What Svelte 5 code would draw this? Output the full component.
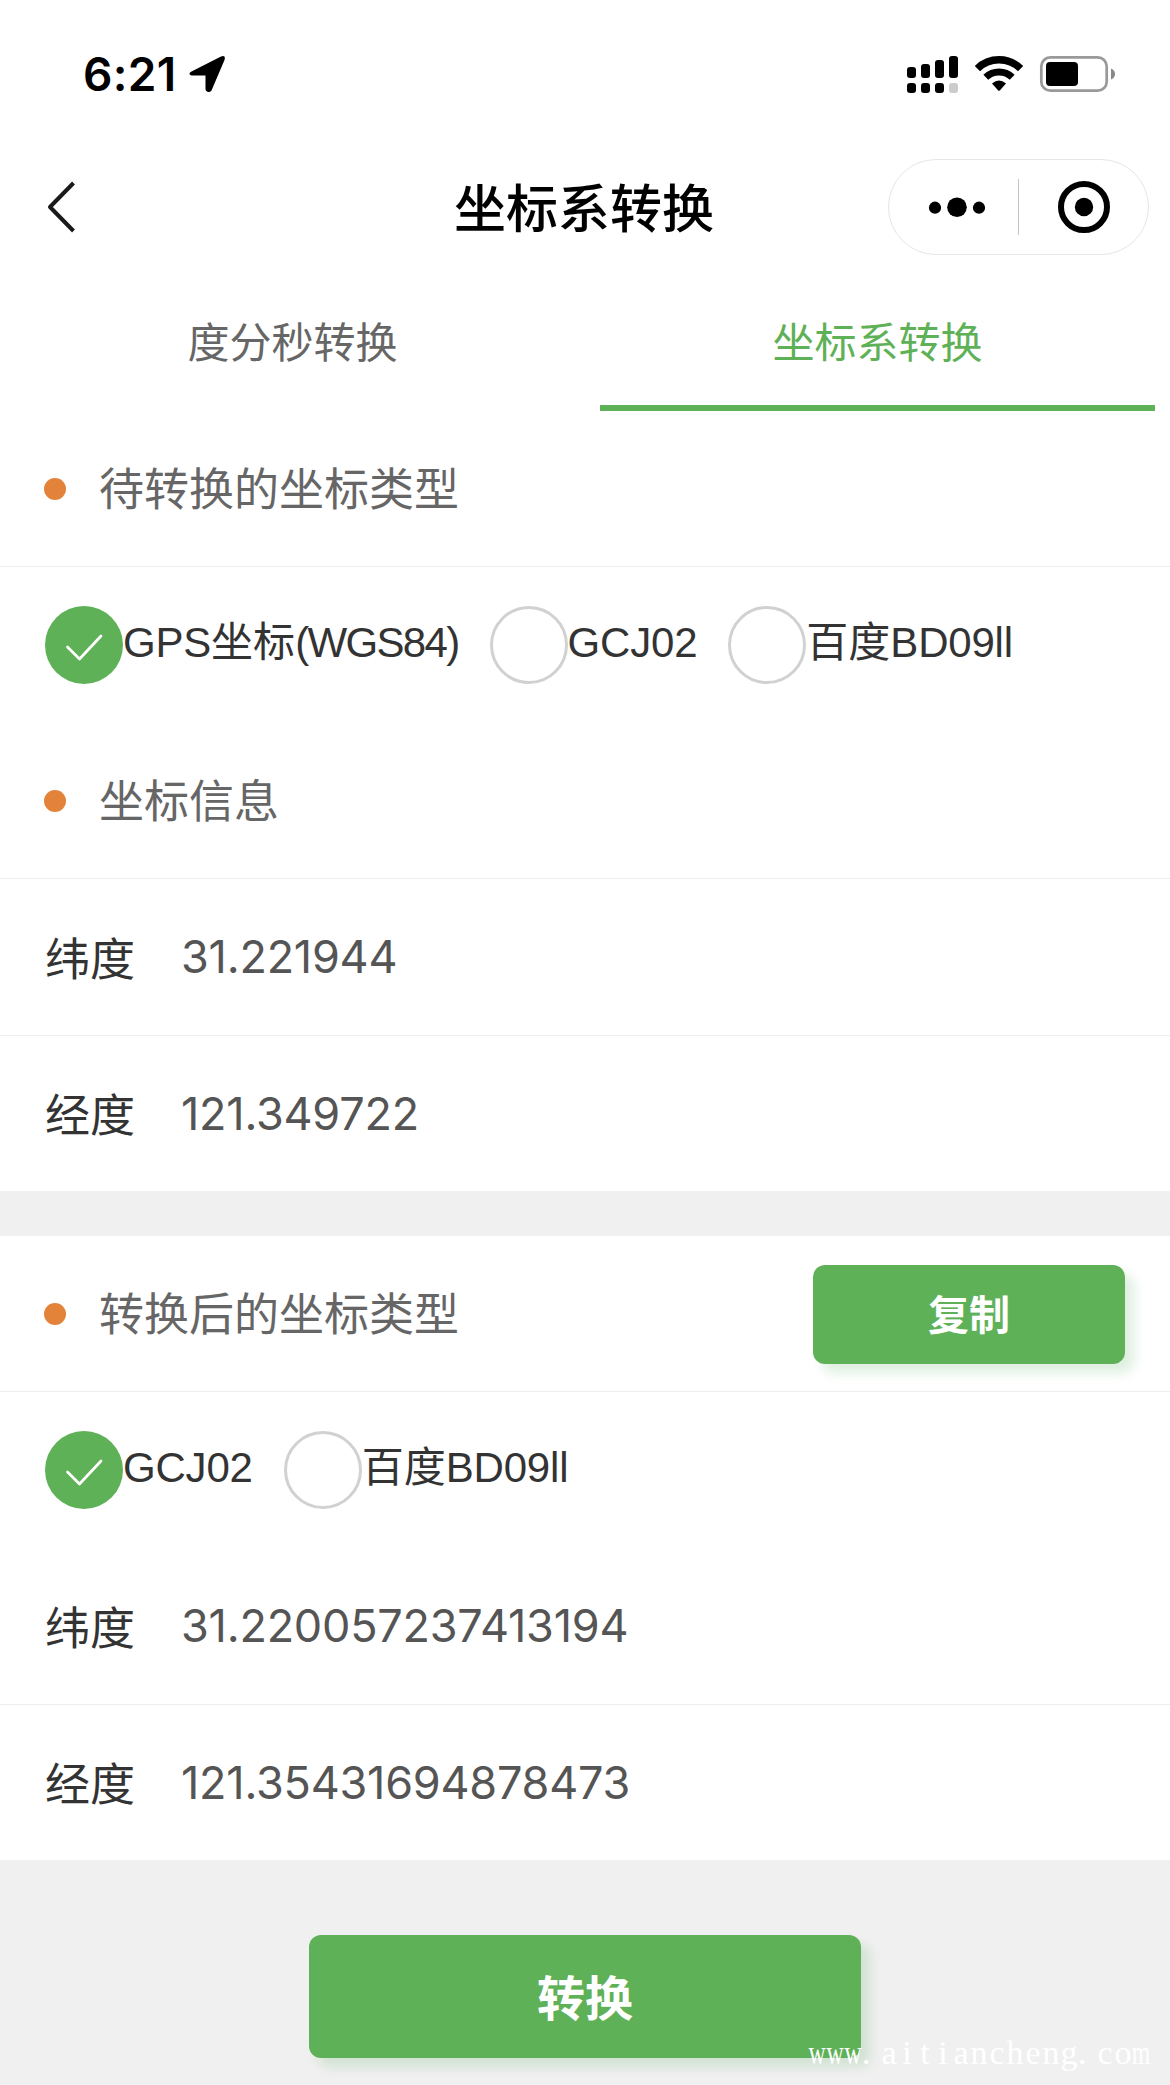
<script>
  const sourceTypes = [
    { parts: ['GPS', '坐标', '(WGS84)'], checked: true },
    { parts: ['GCJ02'], checked: false },
    { parts: ['百度', 'BD09ll'], checked: false }
  ];
  const targetTypes = [
    { parts: ['GCJ02'], checked: true },
    { parts: ['百度', 'BD09ll'], checked: false }
  ];
  const source = [
    { label: '纬度', value: '31.221944' },
    { label: '经度', value: '121.349722' }
  ];
  const result = [
    { label: '纬度', value: '31.220057237413194' },
    { label: '经度', value: '121.35431694878473' }
  ];
  const site = 'www.aitiancheng.com'.split('');
</script>

{#snippet radios(items)}
  <div class="radios">
    {#each items as item}
      <label class="radio">
        <span class="circle" class:on={item.checked}>
          {#if item.checked}
            <svg width="78" height="78" viewBox="0 0 78 78"><path d="M22.500 41 L34.500 53 L56 30" fill="none" stroke="#fff" stroke-width="2.700" stroke-linecap="round" stroke-linejoin="round" /></svg>
          {/if}
        </span>
        <span class="name">{#each item.parts as part}<span class:tight={part.startsWith('(')} class:latin={/^[A-Z]/.test(part)}>{part}</span>{/each}</span>
      </label>
    {/each}
  </div>
{/snippet}

{#snippet fields(rows)}
  {#each rows as row}
    <div class="field">
      <span class="key">{row.label}</span>
      <span class="value">{row.value}</span>
    </div>
  {/each}
{/snippet}

<div class="page">
  <div class="status">
    <span class="time">6:21</span>
    <svg class="arrow" width="37" height="38" viewBox="0 0 37 38"><path d="M2.500 16.500 L32 1.500 Q37 -0.500 35.500 5 L22.500 35.500 Q20.500 38 18 36.500 Q16.500 35.500 16.500 34 V20.500 H4 Q0.500 20.500 0.500 18.500 Q0.500 17.500 2.500 16.500Z" /></svg>
    <svg class="indicators" width="210" height="40" viewBox="906 54 210 40">
      <rect x="907" y="67" width="9" height="11" rx="3" />
      <rect x="921" y="64" width="9" height="14" rx="3" />
      <rect x="935" y="60" width="9" height="18" rx="3" />
      <rect x="949" y="56" width="9" height="22" rx="3" />
      <rect x="907" y="83" width="9" height="10" rx="3" />
      <rect x="921" y="83" width="9" height="10" rx="3" />
      <rect x="935" y="83" width="9" height="10" rx="3" />
      <rect x="949" y="83" width="9" height="10" rx="3" fill="#ccc" />
      <path d="M977.400 68.600 A31 31 0 0 1 1020.600 68.600" fill="none" stroke="#000" stroke-width="7.500" />
      <path d="M985.800 77.300 A19 19 0 0 1 1012.200 77.300" fill="none" stroke="#000" stroke-width="7" />
      <path d="M992 83.500 Q999 77.500 1006 83.500 L1000 90.200 Q999 91.200 998 90.200Z" />
      <rect x="1041.300" y="57.300" width="65.400" height="33.400" rx="9" fill="none" stroke="#999" stroke-width="2.700" />
      <rect x="1046" y="62" width="32" height="24" rx="4" />
      <path d="M1111 68.500 Q1115 70 1115 74 Q1115 78 1111 79.500Z" fill="#888" />
    </svg>
  </div>

  <header class="nav">
    <svg class="back" width="32" height="54" viewBox="0 0 32 54"><path d="M27.500 3 L4 27 L27.500 51" fill="none" stroke="#1a1a1a" stroke-width="4" stroke-linejoin="round" /></svg>
    <h1>坐标系转换</h1>
    <div class="capsule">
      <svg width="259" height="94" viewBox="889 160 259 94">
        <circle cx="935" cy="207.700" r="6.100" />
        <circle cx="957" cy="207.300" r="9.800" />
        <circle cx="979" cy="207.700" r="6.100" />
        <rect x="1018" y="179" width="1" height="56" fill="#c4c4c4" />
        <circle cx="1084" cy="207" r="23" fill="none" stroke="#000" stroke-width="6" />
        <circle cx="1084" cy="207" r="9.200" />
      </svg>
    </div>
  </header>

  <nav class="tabs">
    <div class="tab">度分秒转换</div>
    <div class="tab active">坐标系转换</div>
  </nav>

  <section>
    <div class="head"><i></i><h2>待转换的坐标类型</h2></div>
    {@render radios(sourceTypes)}
    <div class="head"><i></i><h2>坐标信息</h2></div>
    {@render fields(source)}
  </section>

  <section class="converted">
    <div class="head"><i></i><h2>转换后的坐标类型</h2><button class="copy">复制</button></div>
    {@render radios(targetTypes)}
    {@render fields(result)}
  </section>

  <footer>
    <button class="convert">转换</button>
    <div class="watermark">{#each site as c}<span class:wide={c === 'w' || c === 'm'} class:dot={c === '.'}>{c}</span>{/each}</div>
  </footer>
</div>

<style>
  :global(body) {
    background: #f0f0f0;
  }
  .page {
    width: 1170px;
    height: 2085px;
    display: flex;
    flex-direction: column;
    overflow: hidden;
    background: #f0f0f0;
    color: #333;
    font-family: 'Liberation Sans', 'Noto Sans CJK SC', sans-serif;
  }
  .page * {
    box-sizing: border-box;
  }
  svg {
    display: block;
    flex: none;
  }
  h1,
  h2 {
    margin: 0;
    font-weight: 400;
  }
  .status {
    height: 141px;
    padding: 7px 54px 0 83px;
    display: flex;
    align-items: center;
    background: #fff;
  }
  .time {
    width: 106px;
    font: 600 46px/56px Inter, sans-serif;
    letter-spacing: 0.300px;
    color: #000;
  }
  .indicators {
    margin-left: auto;
  }
  .nav {
    height: 132px;
    padding: 0 21px 0 46px;
    display: grid;
    grid-template-columns: 236px 1fr 261px;
    align-items: center;
    background: #fff;
  }
  .nav h1 {
    padding: 0 24px 2px 0;
    margin-left: 22px;
    text-align: center;
    font: 500 52px/70px 'Noto Sans CJK SC', sans-serif;
    color: #000;
  }
  .capsule {
    width: 261px;
    height: 96px;
    border: 1px solid #e6e6e6;
    border-radius: 48px;
  }
  .tabs {
    height: 138px;
    display: grid;
    grid-template-columns: 1fr 1fr;
    background: #fff;
  }
  .tab {
    margin: 0 15px;
    text-align: center;
    font-size: 42px;
    line-height: 142px;
    height: 138px;
    color: #666;
  }
  .active {
    color: #5fb158;
    border-bottom: 6px solid #5fb158;
  }
  section {
    background: #fff;
  }
  .converted {
    margin-top: 45px;
  }
  .head {
    height: 156px;
    padding: 0 45px 0 44px;
    display: flex;
    align-items: center;
    border-bottom: 1px solid #eee;
  }
  .head i {
    width: 22px;
    height: 22px;
    border-radius: 50%;
    background: #e38239;
  }
  .head h2 {
    margin-left: 33px;
    padding-top: 4px;
    font-size: 45px;
    line-height: 60px;
    color: #666;
  }
  button {
    border: 0;
    padding: 0;
    border-radius: 12px;
    background: #5fb158;
    color: #fff;
    font-family: 'Noto Sans CJK SC', sans-serif;
    font-weight: 700;
    box-shadow: 9px 9px 12px rgba(48, 156, 63, 0.16);
  }
  .copy {
    width: 312px;
    height: 99px;
    margin: 1px 0 0 auto;
    padding-bottom: 5px;
    font-size: 41px;
  }
  .radios {
    height: 156px;
    padding: 0 45px;
    display: flex;
    align-items: center;
    gap: 31px;
  }
  .radio {
    display: flex;
    align-items: center;
  }
  .circle {
    width: 78px;
    height: 78px;
    border: 3px solid #d1d1d1;
    border-radius: 50%;
    background: #fff;
  }
  .circle.on {
    border: 0;
    background: #5fb158;
  }
  .name {
    font-size: 42px;
    line-height: 60px;
    white-space: nowrap;
    padding-bottom: 4px;
  }
  .latin {
    letter-spacing: -0.200px;
  }
  .tight {
    letter-spacing: -1.650px;
  }
  .field {
    height: 156px;
    padding: 0 45px;
    display: flex;
    align-items: center;
  }
  .field + .field {
    border-top: 1px solid #eee;
  }
  .key {
    width: 136px;
    padding-top: 7px;
    font-size: 45px;
    line-height: 60px;
  }
  .value {
    font: 400 45px/60px Inter, sans-serif;
    letter-spacing: -0.220px;
    color: #555;
  }
  footer {
    position: relative;
    flex: 1;
    padding-top: 75px;
    display: flex;
    justify-content: center;
    align-items: flex-start;
  }
  .convert {
    width: 552px;
    height: 123px;
    padding-bottom: 3px;
    font-size: 48px;
  }
  .watermark {
    position: absolute;
    right: 20px;
    bottom: 11px;
    display: flex;
    color: #fff;
    font: 34px/42px 'Liberation Serif', serif;
  }
  .watermark span {
    width: 18px;
    display: flex;
    justify-content: center;
  }
  .watermark .wide {
    transform: scaleX(0.7);
  }
  .watermark .dot {
    justify-content: flex-start;
  }
</style>
